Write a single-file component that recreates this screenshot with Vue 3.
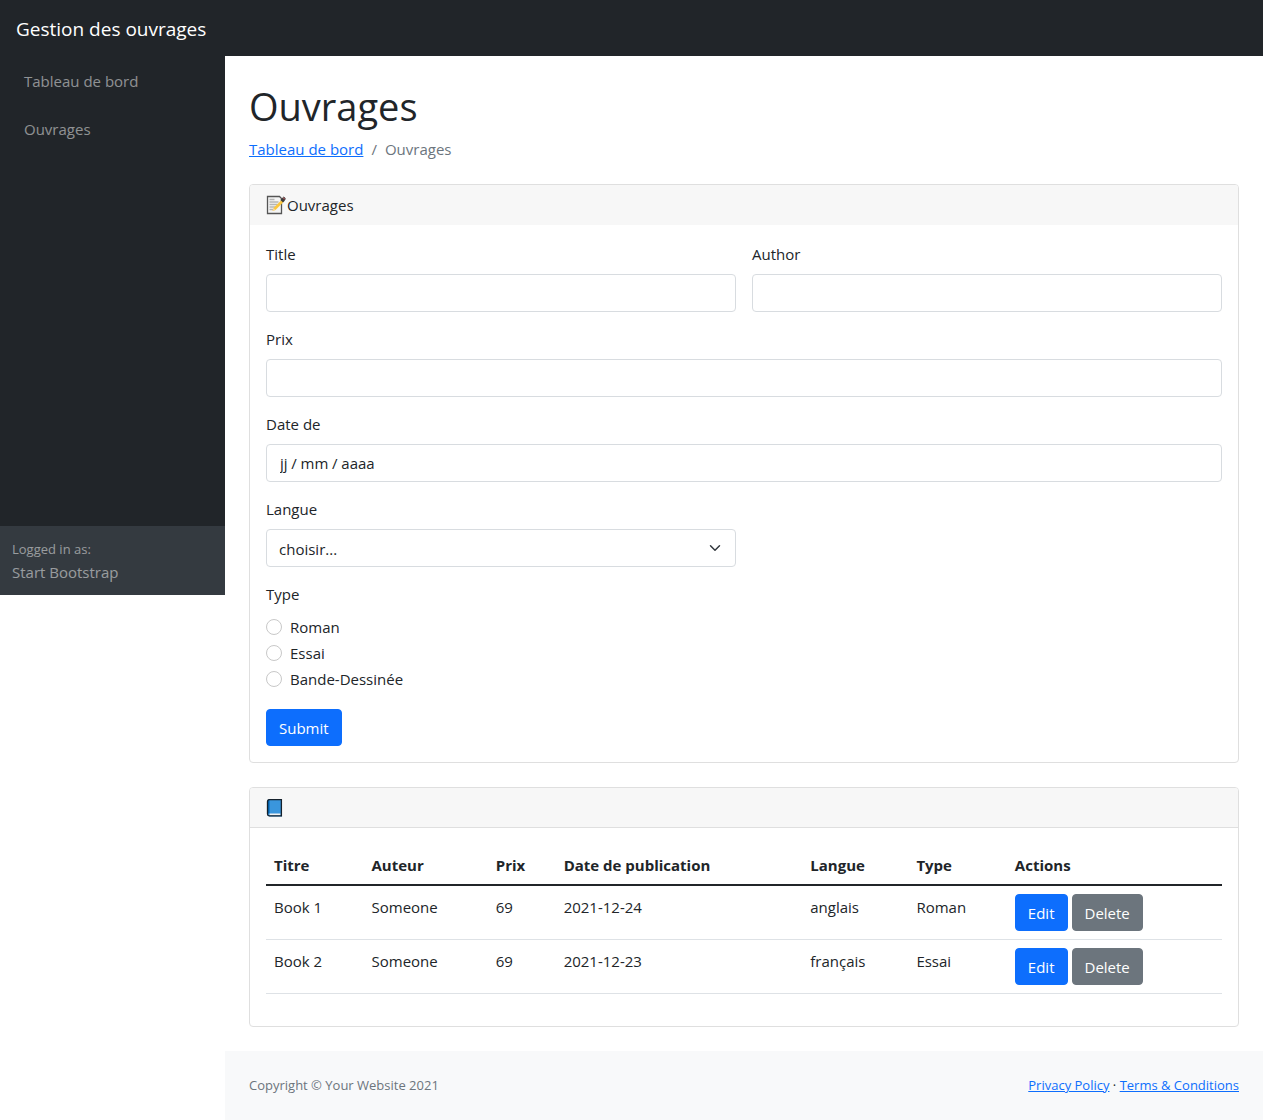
<script setup>
import { ref } from 'vue'

const form = ref({ title: '', author: '', price: '', date: '', language: '', type: '' })
const types = ['Roman', 'Essai', 'Bande-Dessinée']
const languages = ['anglais', 'français']
const books = ref([
  { id: 1, title: 'Book 1', author: 'Someone', price: 69, date: '2021-12-24', language: 'anglais', type: 'Roman' },
  { id: 2, title: 'Book 2', author: 'Someone', price: 69, date: '2021-12-23', language: 'français', type: 'Essai' }
])
</script>

<template>
  <div class="app">
    <header class="topbar">
      <a class="brand" href="#">Gestion des ouvrages</a>
    </header>
    <div class="layout">
      <aside class="sidebar">
        <nav class="side-nav">
          <a href="#">Tableau de bord</a>
          <a href="#">Ouvrages</a>
        </nav>
        <div class="side-footer">
          <div class="small">Logged in as:</div>
          <div>Start Bootstrap</div>
        </div>
      </aside>

      <div class="content">
        <main>
          <h1>Ouvrages</h1>
          <ol class="breadcrumb">
            <li><a href="#">Tableau de bord</a></li>
            <li class="active">Ouvrages</li>
          </ol>

          <section class="card">
            <div class="card-header plain">
              <svg class="emoji" viewBox="0 0 22 22" aria-hidden="true">
                <path d="M2.500 2.500h12l2 2v15h-14z" fill="#f4f4f4" stroke="#555" stroke-width="1.300" />
                <path d="M4.500 5.500h5M4.500 8h9M4.500 10.500h8M4.500 13h7M4.500 15.500h4" stroke="#b5b5b5" stroke-width="1.300" />
                <path d="M7.500 17l1-3 8.500-8.500 2 2-8.500 8.500z" fill="#fbc63f" />
                <path d="M7.500 17l1-3 2 2z" fill="#f3d9a4" />
                <path d="M15.500 6l2-2 2.500 2.500-2 2z" fill="#3a3a3a" />
                <path d="M17.500 4l1-.800q1.500 0 1.800 1.800l-.800 1z" fill="#d0626a" stroke="#222" stroke-width=".800" />
              </svg>
              <span>Ouvrages</span>
            </div>
            <form class="card-body form" @submit.prevent>
              <div class="field half">
                <label for="title">Title</label>
                <input id="title" v-model="form.title" type="text">
              </div>
              <div class="field half">
                <label for="author">Author</label>
                <input id="author" v-model="form.author" type="text">
              </div>
              <div class="field">
                <label for="price">Prix</label>
                <input id="price" v-model="form.price" type="text">
              </div>
              <div class="field">
                <label for="date">Date de</label>
                <input id="date" v-model="form.date" type="text" placeholder="jj&#8197;/&#8197;mm&#8197;/&#8197;aaaa">
              </div>
              <div class="field half">
                <label for="language">Langue</label>
                <select id="language" v-model="form.language">
                  <option value="">choisir...</option>
                  <option v-for="l in languages" :key="l">{{ l }}</option>
                </select>
              </div>
              <fieldset>
                <legend>Type</legend>
                <div v-for="(t, i) in types" :key="t" class="check">
                  <input :id="'type-' + i" v-model="form.type" type="radio" name="type" :value="t">
                  <label :for="'type-' + i">{{ t }}</label>
                </div>
              </fieldset>
              <div class="submit-row">
                <button class="btn primary" type="submit">Submit</button>
              </div>
            </form>
          </section>

          <section class="card">
            <div class="card-header">
              <svg class="emoji" viewBox="0 0 22 22" aria-hidden="true">
                <path d="M3.500 2.500h13.500v17H4.500q-2-.300-2-2v-13q0-1.500 1-2z" fill="#3a96dd" />
                <path d="M3.500 2.500h1v14h-2v-12q0-1.700 1-2z" fill="#0063b1" />
                <path d="M4.500 16.500h11v2h-11z" fill="#f2f2f2" />
                <path d="M4 2.600h12.400v16.300H4.200q-1.700-.200-1.700-2V4.500q0-1.700 1.500-1.900z" fill="none" stroke="#15212c" stroke-width="1.300" />
              </svg>
            </div>
            <div class="card-body">
              <table>
                <colgroup>
                  <col class="c-title"><col class="c-author"><col class="c-price"><col class="c-date"><col class="c-language"><col class="c-type"><col>
                </colgroup>
                <thead>
                  <tr>
                    <th scope="col">Titre</th>
                    <th scope="col">Auteur</th>
                    <th scope="col">Prix</th>
                    <th scope="col">Date de publication</th>
                    <th scope="col">Langue</th>
                    <th scope="col">Type</th>
                    <th scope="col">Actions</th>
                  </tr>
                </thead>
                <tbody>
                  <tr v-for="b in books" :key="b.id">
                    <td>{{ b.title }}</td>
                    <td>{{ b.author }}</td>
                    <td>{{ b.price }}</td>
                    <td>{{ b.date }}</td>
                    <td>{{ b.language }}</td>
                    <td>{{ b.type }}</td>
                    <td class="action-cell">
                      <div class="actions">
                        <button class="btn primary" type="button">Edit</button>
                        <button class="btn secondary" type="button">Delete</button>
                      </div>
                    </td>
                  </tr>
                </tbody>
              </table>
            </div>
          </section>
        </main>

        <footer>
          <div class="copyright">Copyright © Your Website 2021</div>
          <div><a href="#">Privacy Policy</a> · <a href="#">Terms &amp; Conditions</a></div>
        </footer>
      </div>
    </div>
  </div>
</template>

<style>
body {
  margin: 0;
  background: #fff;
}
</style>

<style scoped>
*, *::before, *::after {
  box-sizing: border-box;
}
.app {
  font-family: "Segoe UI", "Open Sans", "Noto Sans", sans-serif;
  font-size: 15px;
  line-height: 24px;
  color: #212529;
}
a {
  color: #0d6efd;
}
.topbar {
  display: flex;
  align-items: center;
  height: 56px;
  padding: 2px 16px 0;
  background: #212529;
}
.brand {
  color: #fff;
  font-size: 19px;
  text-decoration: none;
}
.layout {
  display: flex;
  align-items: flex-start;
}
.sidebar {
  display: flex;
  flex-direction: column;
  flex: 0 0 225px;
  min-height: 539px;
  background: #212529;
  color: rgba(255, 255, 255, 0.5);
}
.side-nav {
  flex: 1;
}
.side-nav a {
  display: block;
  padding: 13px 24px 11px;
  color: inherit;
  text-decoration: none;
}
.side-footer {
  padding: 13px 12px 11px;
  background: #343a40;
}
.side-footer .small {
  font-size: 13px;
  line-height: 21px;
}
.content {
  flex: 1;
  min-width: 0;
}
main {
  padding: 24px 24px 0;
}
h1 {
  margin: 0 0 5px;
  font-size: 38px;
  font-weight: 400;
  line-height: 52px;
}
.breadcrumb {
  display: flex;
  margin: 0 0 23px;
  padding: 0;
  list-style: none;
}
.breadcrumb .active {
  color: #6c757d;
}
.breadcrumb .active::before {
  content: "/";
  padding: 0 8px;
}
.card {
  margin-bottom: 24px;
  border: 1px solid #dfdfdf;
  border-radius: 4px;
}
.card-header {
  display: flex;
  align-items: center;
  height: 40px;
  padding: 0 15px;
  background: #f7f7f7;
  border-bottom: 1px solid #dfdfdf;
  border-radius: 3px 3px 0 0;
}
.card-header.plain {
  border-bottom-color: #f7f7f7;
}
.emoji {
  width: 22px;
  height: 22px;
}
.card-body {
  padding: 16px;
}
.form {
  display: grid;
  grid-template-columns: 1fr 1fr;
  gap: 15px 16px;
  padding-top: 17px;
}
.field, fieldset, .submit-row {
  grid-column: 1 / -1;
}
.field.half {
  grid-column: auto;
}
.field label {
  display: block;
  margin-bottom: 8px;
}
.field input, .field select {
  display: block;
  width: 100%;
  height: 38px;
  padding: 0 13px;
  border: 1px solid #d8dce0;
  border-radius: 4px;
  background-color: #fff;
  color: #212529;
  font: inherit;
}
.field input::placeholder {
  color: #212529;
  opacity: 1;
}
.field select {
  padding: 2px 12px 0;
  appearance: none;
  background-image: url("data:image/svg+xml,%3Csvg xmlns='http://www.w3.org/2000/svg' viewBox='0 0 16 16'%3E%3Cpath fill='none' stroke='%23343a40' stroke-linecap='round' stroke-linejoin='round' stroke-width='2' d='M2 5l6 6 6-6'/%3E%3C/svg%3E");
  background-repeat: no-repeat;
  background-position: right 12px center;
  background-size: 16px 12px;
}
fieldset {
  margin: 0;
  padding: 1px 0;
  border: 0;
}
legend {
  margin-bottom: 8px;
  padding: 0;
}
.check {
  display: flex;
  align-items: center;
  gap: 8px;
  margin-bottom: 2px;
}
.check input {
  appearance: none;
  width: 16px;
  height: 16px;
  margin: 0;
  border: 1px solid #c8c8c8;
  border-radius: 50%;
  background: #fff;
}
.check input:checked {
  border: 5px solid #0d6efd;
}
.btn {
  height: 37px;
  padding: 0 12px;
  border: 1px solid transparent;
  border-radius: 4px;
  color: #fff;
  font: inherit;
  cursor: pointer;
}
.submit-row {
  display: flex;
}
.primary {
  background: #0d6efd;
  border-color: #0d6efd;
}
.secondary {
  background: #6c757d;
  border-color: #6c757d;
}
.actions {
  display: flex;
  gap: 4px;
}
table {
  width: 100%;
  margin-bottom: 16px;
  border-collapse: separate;
  border-spacing: 0;
  table-layout: fixed;
}
.c-title { width: 10.2%; }
.c-author { width: 13%; }
.c-price { width: 7.1%; }
.c-date { width: 25.8%; }
.c-language { width: 11.1%; }
.c-type { width: 10.3%; }
th, td {
  padding: 9px 8px 7px;
  text-align: left;
  vertical-align: top;
}
th {
  font-weight: 700;
  border-bottom: 2px solid #212529;
}
td {
  border-bottom: 1px solid #dee2e6;
}
.action-cell {
  padding: 8px;
}
footer {
  display: flex;
  justify-content: space-between;
  padding: 24px;
  background: #f8f9fa;
  font-size: 13px;
  line-height: 21px;
}
.copyright {
  color: #6c757d;
}
</style>
